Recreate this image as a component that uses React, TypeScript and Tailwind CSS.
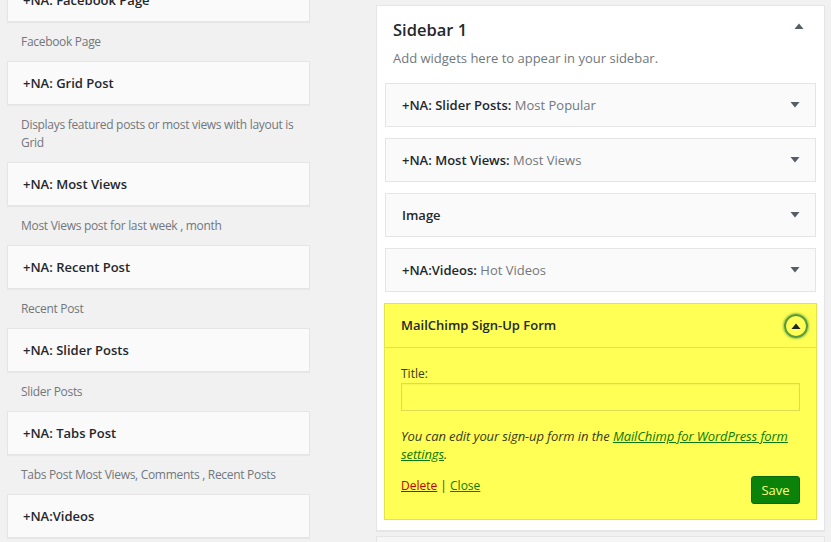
import React from "react";

const font = { fontFamily: '"Open Sans", "Noto Sans", sans-serif' };

function LeftBox({ title }: { title: string }) {
  return (
    <div className="h-[44px] shrink-0 border border-[#e5e5e5] bg-[#fafafa] shadow-[0_1px_1px_rgba(0,0,0,0.04)] flex items-center px-[15px]">
      <span className="text-[13px] font-semibold text-[#23282d] leading-none">{title}</span>
    </div>
  );
}

function Desc({ children }: { children: React.ReactNode }) {
  return (
    <div className="pt-[11px] pb-[10px] px-[14px] text-[12px] tracking-[-0.3px] leading-[18px] text-[#72777c]">{children}</div>
  );
}

function DownArrow() {
  return (
    <svg width="10" height="6" viewBox="0 0 10 6" className="block">
      <path d="M0.5 0 L9.5 0 L5 5.5 Z" fill="#555d66" />
    </svg>
  );
}

function UpArrow({ color = "#555d66" }: { color?: string }) {
  return (
    <svg width="10" height="6" viewBox="0 0 10 6" className="block">
      <path d="M0.5 6 L9.5 6 L5 0.5 Z" fill={color} />
    </svg>
  );
}

function RightWidget({ title, sub }: { title: string; sub?: string }) {
  return (
    <div className="h-[44px] border border-[#e5e5e5] bg-[#fafafa] flex items-center justify-between pl-[16px] pr-[15px]">
      <span className="text-[13px] leading-none">
        <span className="font-semibold text-[#23282d]">{title}</span>
        {sub && <span className="text-[#72777c]"> {sub}</span>}
      </span>
      <DownArrow />
    </div>
  );
}

export default function App() {
  return (
    <div style={font} className="w-[831px] h-[542px] overflow-hidden bg-[#f1f1f1] flex items-start pl-[7px]">
      <div className="w-[303px] flex flex-col mt-[-22px]">
        <LeftBox title="+NA: Facebook Page" />
        <Desc>Facebook Page</Desc>
        <LeftBox title="+NA: Grid Post" />
        <Desc>Displays featured posts or most views with layout is Grid</Desc>
        <LeftBox title="+NA: Most Views" />
        <Desc>Most Views post for last week , month</Desc>
        <LeftBox title="+NA: Recent Post" />
        <Desc>Recent Post</Desc>
        <LeftBox title="+NA: Slider Posts" />
        <Desc>Slider Posts</Desc>
        <LeftBox title="+NA: Tabs Post" />
        <Desc>Tabs Post Most Views, Comments , Recent Posts</Desc>
        <LeftBox title="+NA:Videos" />
      </div>

      <div className="ml-[66px] w-[449px] flex flex-col mt-[5px]">
        <div className="bg-white border border-[#e5e5e5] shadow-[0_1px_1px_rgba(0,0,0,0.04)] px-[8px] pb-[10px]">
          <div className="flex items-start justify-between pl-[8px] pr-[12px] pt-[12px]">
            <h2 className="text-[16.5px] leading-[24px] font-semibold text-[#23282d]">Sidebar 1</h2>
            <div className="pt-[5px]">
              <UpArrow />
            </div>
          </div>
          <p className="pl-[8px] mt-[7px] text-[13px] leading-[18px] text-[#72777c]">Add widgets here to appear in your sidebar.</p>
          <div className="mt-[16px] flex flex-col gap-[11px]">
            <RightWidget title="+NA: Slider Posts:" sub="Most Popular" />
            <RightWidget title="+NA: Most Views:" sub="Most Views" />
            <RightWidget title="Image" />
            <RightWidget title="+NA:Videos:" sub="Hot Videos" />
            <div className="-mx-[1px] border border-[#e3e34a] bg-[#ffff55]">
              <div className="h-[44px] border-b border-[#e3e34a] flex items-center justify-between pl-[16px] pr-[8px]">
                <span className="text-[13px] leading-none font-semibold text-[#23282d]">MailChimp Sign-Up Form</span>
                <div className="w-[24px] h-[24px] rounded-full border-2 border-[#5a9a3a] shadow-[0_0_2px_1px_rgba(60,140,60,0.5)] flex items-center justify-center">
                  <UpArrow color="#1d2327" />
                </div>
              </div>
              <div className="pl-[16px] pr-[16px] pt-[17px] pb-[15px]">
                <div className="text-[12px] leading-[18px] text-[#3a3a20]">Title:</div>
                <div className="h-[28px] border border-[#dcdc50] bg-[#ffff55] shadow-[inset_0_1px_2px_rgba(0,0,0,0.05)]" />
                <p className="mt-[16px] text-[13px] leading-[18px] italic text-[#3a3a20] tracking-[-0.1px]">
                  You can edit your sign-up form in the{" "}
                  <a className="underline text-[#0a7a0a]">MailChimp for WordPress form settings</a>.
                </p>
                <div className="mt-[13px] flex items-start justify-between">
                  <div className="pt-[1px] text-[12px] leading-[18px] text-[#3a3a20]">
                    <a className="underline text-[#c00000]">Delete</a> | <a className="underline text-[#0a7a0a]">Close</a>
                  </div>
                  <button className="h-[28px] w-[49px] rounded-[3px] bg-[#0b830b] border border-[#066806] text-[#ffff80] text-[13px] leading-none">
                    Save
                  </button>
                </div>
              </div>
            </div>
          </div>
        </div>
        <div className="mt-[5px] h-[20px] bg-[#f6f6f6] border border-[#e5e5e5]" />
      </div>
    </div>
  );
}
